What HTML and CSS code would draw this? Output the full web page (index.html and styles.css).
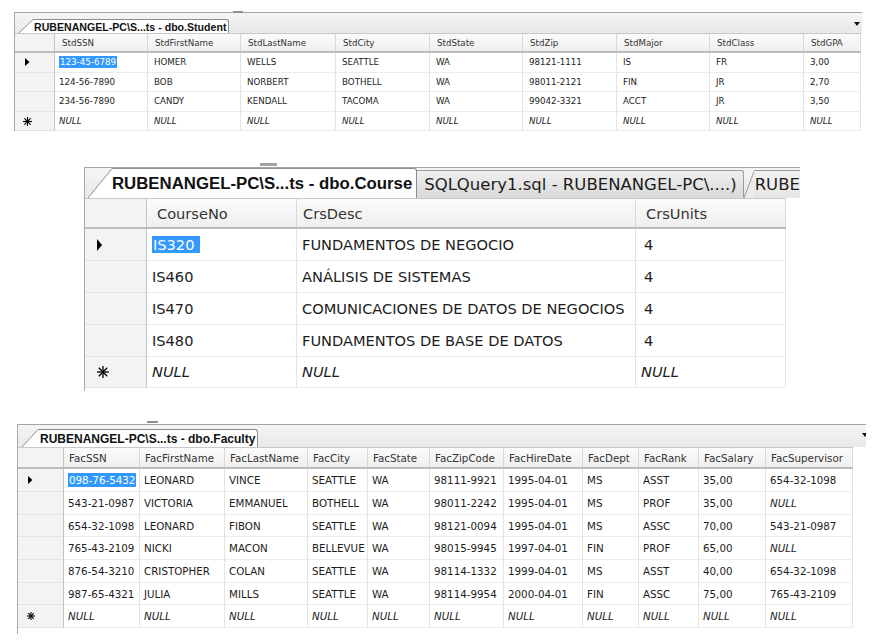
FILE: index.html
```html
<!DOCTYPE html>
<html lang="es">
<head>
<meta charset="utf-8">
<title>Tablas SSMS</title>
<link rel="stylesheet" href="styles.css">
</head>
<body>

<section class="panel student">
  <span class="grip"></span>
  <div class="strip">
    <div class="tab active">
      <svg class="slant" width="14" height="14" viewBox="0 0 14 14"><polygon points="0,14 14,0 14,14" fill="#fff"/><line x1="0" y1="14" x2="14" y2="0.5" stroke="#8c8c8c"/></svg>
      <span class="tab-label">RUBENANGEL-PC\S...ts - dbo.Student</span>
    </div>
    <span class="drop"></span>
  </div>
  <div class="grid">
    <div class="row head"><div class="cell ind"></div><div class="cell">StdSSN</div><div class="cell">StdFirstName</div><div class="cell">StdLastName</div><div class="cell">StdCity</div><div class="cell">StdState</div><div class="cell">StdZip</div><div class="cell">StdMajor</div><div class="cell">StdClass</div><div class="cell">StdGPA</div></div>
    <div class="row"><div class="cell ind"><svg width="9" height="8" viewBox="0 0 9 8"><polygon points="2,0 6.5,4 2,8" fill="#000"/></svg></div><div class="cell first"><span class="sel">123-45-6789</span></div><div class="cell">HOMER</div><div class="cell">WELLS</div><div class="cell">SEATTLE</div><div class="cell">WA</div><div class="cell">98121-1111</div><div class="cell">IS</div><div class="cell">FR</div><div class="cell">3,00</div></div>
    <div class="row"><div class="cell ind"></div><div class="cell first">124-56-7890</div><div class="cell">BOB</div><div class="cell">NORBERT</div><div class="cell">BOTHELL</div><div class="cell">WA</div><div class="cell">98011-2121</div><div class="cell">FIN</div><div class="cell">JR</div><div class="cell">2,70</div></div>
    <div class="row"><div class="cell ind"></div><div class="cell first">234-56-7890</div><div class="cell">CANDY</div><div class="cell">KENDALL</div><div class="cell">TACOMA</div><div class="cell">WA</div><div class="cell">99042-3321</div><div class="cell">ACCT</div><div class="cell">JR</div><div class="cell">3,50</div></div>
    <div class="row"><div class="cell ind"><svg width="9" height="9" viewBox="0 0 9 9"><g stroke="#000" stroke-width="1.1"><line x1="4.5" y1="0" x2="4.5" y2="9"/><line x1="0" y1="4.5" x2="9" y2="4.5"/><line x1="1.4" y1="1.4" x2="7.6" y2="7.6"/><line x1="7.6" y1="1.4" x2="1.4" y2="7.6"/></g></svg></div><div class="cell first null">NULL</div><div class="cell null">NULL</div><div class="cell null">NULL</div><div class="cell null">NULL</div><div class="cell null">NULL</div><div class="cell null">NULL</div><div class="cell null">NULL</div><div class="cell null">NULL</div><div class="cell null">NULL</div></div>
  </div>
</section>

<section class="panel course">
  <span class="grip"></span>
  <div class="strip">
    <div class="tab active">
      <svg class="slant" width="24" height="30" viewBox="0 0 24 30"><polygon points="0,30 24,0 24,30" fill="#fff"/><line x1="0" y1="30" x2="24" y2="0.5" stroke="#8c8c8c"/></svg>
      <span class="tab-label">RUBENANGEL-PC\S...ts - dbo.Course</span>
    </div>
    <div class="tab inactive">
      <span class="tab-label">SQLQuery1.sql - RUBENANGEL-PC\....)</span>
    </div>
    <div class="tab inactive last">
      <svg class="slant" width="10" height="27" viewBox="0 0 10 27"><polygon points="0,27 10,0 10,27" fill="#ececec"/><line x1="0" y1="27" x2="10" y2="0.5" stroke="#9a9a9a"/></svg>
      <span class="tab-label">RUBE</span>
    </div>
  </div>
  <div class="grid">
    <div class="row head"><div class="cell ind"></div><div class="cell wide">CourseNo</div><div class="cell">CrsDesc</div><div class="cell wide">CrsUnits</div></div>
    <div class="row"><div class="cell ind"><svg width="12" height="12" viewBox="0 0 12 12"><polygon points="0,0 5,6 0,12" fill="#000"/></svg></div><div class="cell"><span class="sel">IS320</span></div><div class="cell">FUNDAMENTOS DE NEGOCIO</div><div class="cell units">4</div></div>
    <div class="row"><div class="cell ind"></div><div class="cell">IS460</div><div class="cell">ANÁLISIS DE SISTEMAS</div><div class="cell units">4</div></div>
    <div class="row"><div class="cell ind"></div><div class="cell">IS470</div><div class="cell">COMUNICACIONES DE DATOS DE NEGOCIOS</div><div class="cell units">4</div></div>
    <div class="row"><div class="cell ind"></div><div class="cell">IS480</div><div class="cell">FUNDAMENTOS DE BASE DE DATOS</div><div class="cell units">4</div></div>
    <div class="row"><div class="cell ind"><svg width="12" height="12" viewBox="0 0 12 12"><g stroke="#000" stroke-width="1.3"><line x1="6" y1="0" x2="6" y2="12"/><line x1="0" y1="6" x2="12" y2="6"/><line x1="1.8" y1="1.8" x2="10.2" y2="10.2"/><line x1="10.2" y1="1.8" x2="1.8" y2="10.2"/></g></svg></div><div class="cell null">NULL</div><div class="cell null">NULL</div><div class="cell null">NULL</div></div>
  </div>
</section>

<section class="panel faculty">
  <span class="grip"></span>
  <div class="strip">
    <div class="tab active">
      <svg class="slant" width="16" height="18" viewBox="0 0 16 18"><polygon points="0,18 16,0 16,18" fill="#fff"/><line x1="0" y1="18" x2="16" y2="0.5" stroke="#8c8c8c"/></svg>
      <span class="tab-label">RUBENANGEL-PC\S...ts - dbo.Faculty</span>
    </div>
    <span class="drop"></span>
  </div>
  <div class="grid">
    <div class="row head"><div class="cell ind"></div><div class="cell">FacSSN</div><div class="cell">FacFirstName</div><div class="cell">FacLastName</div><div class="cell">FacCity</div><div class="cell">FacState</div><div class="cell">FacZipCode</div><div class="cell">FacHireDate</div><div class="cell">FacDept</div><div class="cell">FacRank</div><div class="cell">FacSalary</div><div class="cell">FacSupervisor</div></div>
    <div class="row"><div class="cell ind"><svg width="8" height="8" viewBox="0 0 8 8"><polygon points="1,0 5.5,4 1,8" fill="#000"/></svg></div><div class="cell"><span class="sel">098-76-5432</span></div><div class="cell">LEONARD</div><div class="cell">VINCE</div><div class="cell">SEATTLE</div><div class="cell">WA</div><div class="cell">98111-9921</div><div class="cell">1995-04-01</div><div class="cell">MS</div><div class="cell">ASST</div><div class="cell">35,00</div><div class="cell">654-32-1098</div></div>
    <div class="row"><div class="cell ind"></div><div class="cell">543-21-0987</div><div class="cell">VICTORIA</div><div class="cell">EMMANUEL</div><div class="cell">BOTHELL</div><div class="cell">WA</div><div class="cell">98011-2242</div><div class="cell">1995-04-01</div><div class="cell">MS</div><div class="cell">PROF</div><div class="cell">35,00</div><div class="cell null">NULL</div></div>
    <div class="row"><div class="cell ind"></div><div class="cell">654-32-1098</div><div class="cell">LEONARD</div><div class="cell">FIBON</div><div class="cell">SEATTLE</div><div class="cell">WA</div><div class="cell">98121-0094</div><div class="cell">1995-04-01</div><div class="cell">MS</div><div class="cell">ASSC</div><div class="cell">70,00</div><div class="cell">543-21-0987</div></div>
    <div class="row"><div class="cell ind"></div><div class="cell">765-43-2109</div><div class="cell">NICKI</div><div class="cell">MACON</div><div class="cell">BELLEVUE</div><div class="cell">WA</div><div class="cell">98015-9945</div><div class="cell">1997-04-01</div><div class="cell">FIN</div><div class="cell">PROF</div><div class="cell">65,00</div><div class="cell null">NULL</div></div>
    <div class="row"><div class="cell ind"></div><div class="cell">876-54-3210</div><div class="cell">CRISTOPHER</div><div class="cell">COLAN</div><div class="cell">SEATTLE</div><div class="cell">WA</div><div class="cell">98114-1332</div><div class="cell">1999-04-01</div><div class="cell">MS</div><div class="cell">ASST</div><div class="cell">40,00</div><div class="cell">654-32-1098</div></div>
    <div class="row"><div class="cell ind"></div><div class="cell">987-65-4321</div><div class="cell">JULIA</div><div class="cell">MILLS</div><div class="cell">SEATTLE</div><div class="cell">WA</div><div class="cell">98114-9954</div><div class="cell">2000-04-01</div><div class="cell">FIN</div><div class="cell">ASSC</div><div class="cell">75,00</div><div class="cell">765-43-2109</div></div>
    <div class="row"><div class="cell ind"><svg width="8" height="8" viewBox="0 0 8 8"><g stroke="#000" stroke-width="1.1"><line x1="4" y1="0" x2="4" y2="8"/><line x1="0" y1="4" x2="8" y2="4"/><line x1="1.2" y1="1.2" x2="6.8" y2="6.8"/><line x1="6.8" y1="1.2" x2="1.2" y2="6.8"/></g></svg></div><div class="cell null">NULL</div><div class="cell null">NULL</div><div class="cell null">NULL</div><div class="cell null">NULL</div><div class="cell null">NULL</div><div class="cell null">NULL</div><div class="cell null">NULL</div><div class="cell null">NULL</div><div class="cell null">NULL</div><div class="cell null">NULL</div><div class="cell null">NULL</div></div>
  </div>
</section>

</body>
</html>
```

FILE: styles.css
```css
* { box-sizing: border-box; }

html, body {
  margin: 0;
  padding: 0;
  background: #fff;
}

body {
  width: 876px;
  height: 641px;
  overflow: hidden;
  font-family: "DejaVu Sans", "Noto Sans", sans-serif;
  color: #1c1c1c;
}

/* ---------- panels ---------- */
.panel {
  position: relative;
  border-left: 1px solid #a9a9a9;
}

.student {
  margin: 12px 0 0 14px;
  width: 848px;
  font-size: 8.7px;
  --cols: 40px 93px 93px 95px 94px 93px 94px 93px 94px 57px;
  --hh: 20px;
  --rh: 19.6px;
  --pad: 6px;
  --ipad: 8px;
}

.course {
  margin: 36px 0 0 84px;
  width: 716px;
  padding-bottom: 3px;
  font-size: 14.6px;
  --cols: 62px 150px 339px 150px;
  --hh: 31px;
  --rh: 31.8px;
  --pad: 5px;
  --ipad: 12px;
}

.faculty {
  margin: 33px 0 0 17px;
  width: 849px;
  padding-bottom: 6px;
  font-size: 10.3px;
  --cols: 46px 76px 85px 83px 60px 62px 74px 79px 56px 60px 67px 87px;
  --hh: 22px;
  --rh: 22.7px;
  --pad: 4px;
  --ipad: 9px;
}

/* splitter grips above the frames */
.grip {
  position: absolute;
  height: 2px;
  background: #8f8f8f;
}
.student .grip { left: 218px; top: -1px; width: 10px; }
.course .grip { left: 175px; top: -4px; width: 17px; height: 3px; background: #a3a3a3; }
.faculty .grip { left: 129px; top: -3px; width: 11px; }

/* ---------- tab strip ---------- */
.strip {
  display: flex;
  align-items: flex-end;
  border-top: 1px solid #a4a4a4;
  background: linear-gradient(#f5f5f5, #e8e8e8);
  overflow: hidden;
}
.student .strip { height: 21px; padding-left: 4px; }
.course .strip { height: 31px; padding-left: 3px; }
.faculty .strip { height: 23px; padding-left: 4px; }

.tab {
  display: flex;
  align-items: flex-end;
  flex: none;
}
.student .tab { height: 14px; }
.course .tab { height: 30px; }
.course .tab.inactive { height: 28px; }
.faculty .tab { height: 18px; }

.slant {
  display: block;
  flex: none;
}

.tab-label {
  display: flex;
  align-items: center;
  height: 100%;
  border-top: 1px solid #8c8c8c;
  border-right: 1px solid #8c8c8c;
  border-top-right-radius: 3px;
  background: #fff;
  white-space: nowrap;
}

.active .tab-label {
  font-family: "Liberation Sans", Arial, sans-serif;
  font-weight: bold;
  color: #111;
}
.student .active .tab-label { font-size: 10.6px; padding: 0 2px 0 1px; }
.course .active .tab-label { font-size: 16.8px; padding: 0 4px 0 0; }
.faculty .active .tab-label { font-size: 12px; padding: 0 2px; }

.inactive .tab-label {
  background: linear-gradient(#efefef, #d9d9d9);
  border-color: #9a9a9a;
  font-size: 16.5px;
  padding: 0 6px 0 7px;
  color: #1c1c1c;
}
.inactive.last .tab-label {
  background: linear-gradient(#f1f1f1, #e6e6e6);
  padding: 0 2px 0 1px;
  border-right: none;
}

.drop {
  margin-left: auto;
  align-self: flex-end;
  width: 0;
  height: 0;
  border-left: 3.5px solid transparent;
  border-right: 3.5px solid transparent;
  border-top: 4px solid #111;
}
.student .drop { margin-right: 2px; margin-bottom: 7px; }
.faculty .drop { margin-right: -2px; margin-bottom: 10px; }

/* ---------- grid ---------- */
.grid { width: max-content; }

.row {
  display: grid;
  grid-template-columns: var(--cols);
  height: var(--rh);
}

.head {
  height: var(--hh);
  border-top: 1px solid #c8c8c8;
  border-bottom: 2px solid #bcbcbc;
  background: linear-gradient(#fbfbfb, #efefef);
  color: #333;
}

.cell {
  display: flex;
  align-items: center;
  padding-left: var(--pad);
  border-right: 1px solid #e4e4e4;
  border-bottom: 1px solid #ececec;
  white-space: nowrap;
  overflow: hidden;
}

.head .cell {
  border-bottom: none;
  border-right-color: #d9d9d9;
  padding-left: calc(var(--pad) + 1px);
}

.student .cell.first { padding-left: 4px; }
.course .head .cell.wide { padding-left: 10px; }
.course .cell.units { padding-left: 8px; }

.cell.ind {
  padding-left: var(--ipad);
  background: #f3f3f3;
  border-right-color: #c4c4c4;
  border-bottom-color: #e2e2e2;
}
.cell.ind svg { display: block; }

.null { font-style: italic; }

.sel {
  background: #3399ff;
  color: #fff;
  padding: 1px 1px;
}
.course .sel { padding: 0 6px 0 1px; }
```
